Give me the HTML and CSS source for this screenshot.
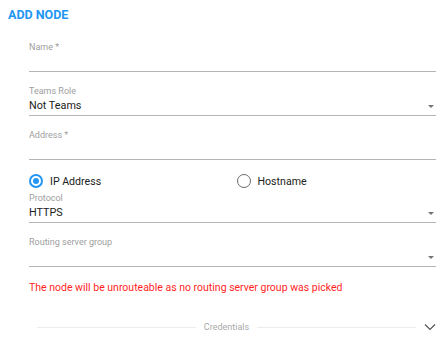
FILE: index.html
```html
<!DOCTYPE html>
<html>
<head>
<meta charset="utf-8">
<link rel="stylesheet" href="styles.css">
</head>
<body>
<div class="dialog">
  <h1 class="title">ADD NODE</h1>
  <div class="form">
    <div class="field">
      <div class="label">Name *</div>
      <div class="control"></div>
    </div>
    <div class="field">
      <div class="label">Teams Role</div>
      <div class="control select"><span class="value">Not Teams</span><span class="arrow"></span></div>
    </div>
    <div class="field">
      <div class="label">Address *</div>
      <div class="control"></div>
    </div>
    <div class="radios">
      <label class="radio"><span class="circle checked"></span><span class="rtext">IP Address</span></label>
      <label class="radio"><span class="circle"></span><span class="rtext">Hostname</span></label>
    </div>
    <div class="field tight">
      <div class="label">Protocol</div>
      <div class="control select"><span class="value">HTTPS</span><span class="arrow"></span></div>
    </div>
    <div class="field">
      <div class="label">Routing server group</div>
      <div class="control select"><span class="value"></span><span class="arrow"></span></div>
    </div>
    <p class="error">The node will be unrouteable as no routing server group was picked</p>
    <div class="divider">
      <span class="line"></span>
      <span class="dtext">Credentials</span>
      <span class="line"></span>
      <svg class="chev" width="12" height="8" viewBox="0 0 12 8"><path d="M1 1.5 L6 6.5 L11 1.5" fill="none" stroke="#555" stroke-width="1.2"/></svg>
    </div>
  </div>
</div>
</body>
</html>
```

FILE: styles.css
```css
* { box-sizing: border-box; }
html, body { margin: 0; padding: 0; background: #fff; }
body { font-family: Roboto, "Noto Sans", sans-serif; color: #212121; }
.dialog { padding: 6px 7px 0 8px; }
.title {
  margin: 0;
  font-size: 12.5px;
  line-height: 18px;
  font-weight: 700;
  color: #2196f3;
}
.form { padding-left: 21px; display: flex; flex-direction: column; }
.field { margin-top: 13px; display: flex; flex-direction: column; }
.field:first-child { margin-top: 17px; }
.field.tight { margin-top: 1px; }
.label { font-size: 9px; line-height: 12px; color: #9e9e9e; }
.control {
  height: 19px;
  border-bottom: 1px solid #b5b5b5;
  display: flex;
  align-items: center;
  justify-content: space-between;
}
.value { font-size: 10.8px; line-height: 16px; color: #212121; padding-bottom: 1px; }
.arrow {
  width: 0; height: 0;
  border-left: 3.5px solid transparent;
  border-right: 3.5px solid transparent;
  border-top: 3.5px solid #757575;
  margin-right: 2px;
}
.radios { display: grid; grid-template-columns: 1fr 1fr; margin-top: 11px; height: 20px; }
.radio { display: flex; align-items: center; gap: 7px; font-size: 10.6px; color: #212121; }
.radio:last-child { padding-left: 4px; }
.circle {
  width: 14px; height: 14px;
  border-radius: 50%;
  border: 1.5px solid #6b6b6b;
  display: flex; align-items: center; justify-content: center;
}
.circle.checked { border: 2px solid #2196f3; }
.circle.checked::after {
  content: "";
  width: 6px; height: 6px; border-radius: 50%;
  background: #2196f3;
}
.error {
  margin: 14px 0 0 0;
  font-size: 10.5px;
  line-height: 14px;
  color: #ff1f1f;
}
.divider {
  margin-top: 26px;
  display: flex;
  align-items: center;
  padding-left: 8px;
  gap: 8px;
}
.divider .line { flex: 1; height: 1px; background: #ececec; }
.dtext { font-size: 9px; color: #a8a8a8; line-height: 12px; }
```
